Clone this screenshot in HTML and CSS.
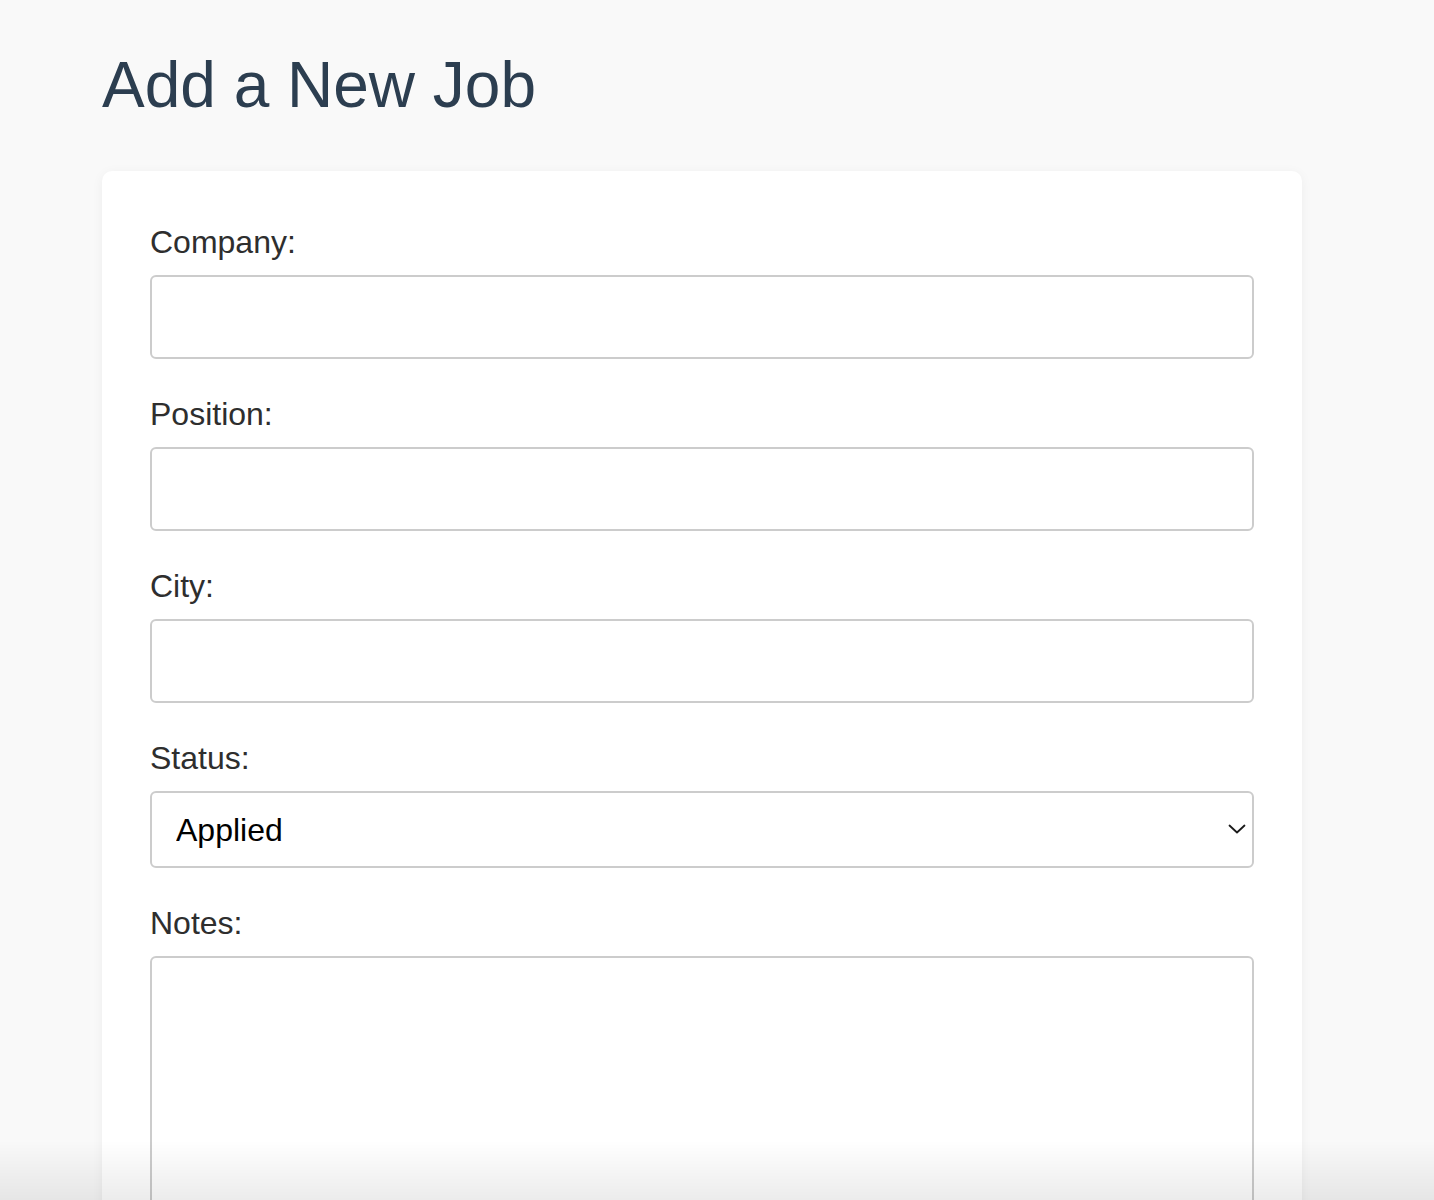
FILE: index.html
```html
<!DOCTYPE html>
<html lang="en">
<head>
<meta charset="utf-8">
<title>Add a New Job</title>
<link rel="stylesheet" href="styles.css">
</head>
<body>
<main class="page">
  <h1 class="title">Add a New Job</h1>
  <form class="card">
    <div class="field">
      <label class="label" for="company">Company:</label>
      <input class="control" id="company" type="text">
    </div>
    <div class="field">
      <label class="label" for="position">Position:</label>
      <input class="control" id="position" type="text">
    </div>
    <div class="field">
      <label class="label" for="city">City:</label>
      <input class="control" id="city" type="text">
    </div>
    <div class="field">
      <label class="label" for="status">Status:</label>
      <div class="select-wrap">
        <select class="control select" id="status">
          <option>Applied</option>
          <option>Interviewing</option>
          <option>Offer</option>
          <option>Rejected</option>
        </select>
        <svg class="chevron" width="18" height="10" viewBox="0 0 18 10" aria-hidden="true">
          <path d="M1.5 1.5 L9 8.5 L16.5 1.5" fill="none" stroke="#1a1a1a" stroke-width="1.8" stroke-linecap="round" stroke-linejoin="round"/>
        </svg>
      </div>
    </div>
    <div class="field">
      <label class="label" for="notes">Notes:</label>
      <textarea class="control textarea" id="notes"></textarea>
    </div>
  </form>
</main>
<div class="bottom-fade"></div>
</body>
</html>
```

FILE: styles.css
```css
html, body {
  margin: 0;
  padding: 0;
}

body {
  background: #f9f9f9;
  font-family: "Liberation Sans", Arial, Helvetica, sans-serif;
  color: #333333;
}

.page {
  padding: 48px 0 60px 102px;
  width: 1200px;
}

.title {
  margin: 0 0 49px 0;
  font-size: 64px;
  font-weight: 400;
  line-height: 74px;
  color: #2c3e50;
}

.card {
  background: #ffffff;
  border-radius: 10px;
  box-shadow: 0 2px 12px rgba(0, 0, 0, 0.05);
  padding: 53px 48px 48px 48px;
}

.field {
  display: flex;
  flex-direction: column;
  margin-bottom: 37px;
}

.label {
  font-size: 32px;
  line-height: 36px;
  color: #2e2e2e;
  margin-bottom: 15px;
}

.control {
  box-sizing: border-box;
  width: 100%;
  height: 84px;
  border: 2px solid #cccccc;
  border-radius: 6px;
  background: #ffffff;
  font-family: "Liberation Sans", Arial, Helvetica, sans-serif;
  font-size: 32px;
  color: #000000;
  padding: 0 24px;
  margin: 0;
  outline: none;
}

.select-wrap {
  position: relative;
}

.select {
  height: 77px;
  appearance: none;
  -webkit-appearance: none;
  padding: 0 60px 0 24px;
}

.chevron {
  position: absolute;
  right: 8px;
  top: 33px;
  pointer-events: none;
}

.textarea {
  height: 300px;
  resize: vertical;
  padding: 20px 24px;
}

.bottom-fade {
  position: fixed;
  left: 0;
  right: 0;
  bottom: 0;
  height: 60px;
  background: linear-gradient(to bottom, rgba(0, 0, 0, 0), rgba(0, 0, 0, 0.075));
  pointer-events: none;
}
```
